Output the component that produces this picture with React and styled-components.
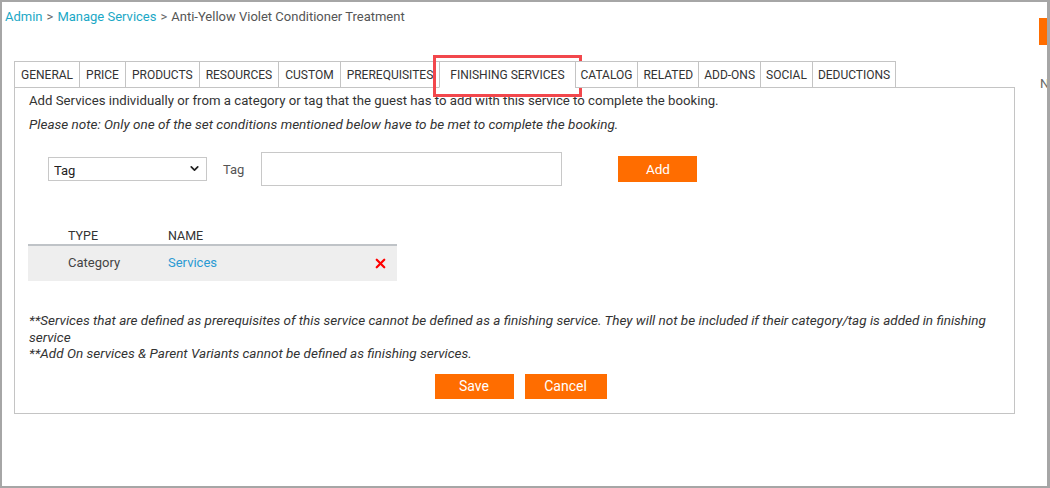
import React from "react";
import styled, { createGlobalStyle } from "styled-components";
import { ChevronDown, X } from "lucide-react";

const tabs = [
    "GENERAL",
    "PRICE",
    "PRODUCTS",
    "RESOURCES",
    "CUSTOM",
    "PREREQUISITES",
    "FINISHING SERVICES",
    "CATALOG",
    "RELATED",
    "ADD-ONS",
    "SOCIAL",
    "DEDUCTIONS",
];

const ACTIVE = 6;

const GlobalStyle = createGlobalStyle`
    html, body {
        margin: 0;
        padding: 0;
        background: #fff;
    }
    body {
        font-family: Roboto, "Liberation Sans", Arial, sans-serif;
        color: #333;
    }
    * {
        box-sizing: border-box;
    }
`;

const App = () => {
    return (
        <>
            <GlobalStyle />
            <Frame>
                <Main>
                    <Breadcrumb>
                        <Crumb href="#">Admin</Crumb>
                        <Sep>&gt;</Sep>
                        <Crumb href="#">Manage Services</Crumb>
                        <Sep>&gt;</Sep>
                        <Current>Anti-Yellow Violet Conditioner Treatment</Current>
                    </Breadcrumb>

                    <TabBar>
                        {tabs.map((t, i) => (
                            <Tab key={t} $active={i === ACTIVE} $compact={i > ACTIVE}>
                                {t}
                                {i === ACTIVE && <Highlight />}
                            </Tab>
                        ))}
                    </TabBar>

                    <Panel>
                        <Intro>
                            Add Services individually or from a category or tag that the guest has to add with this service to complete the booking.
                        </Intro>
                        <Note>
                            Please note: Only one of the set conditions mentioned below have to be met to complete the booking.
                        </Note>

                        <FormRow>
                            <SelectWrap>
                                <Select defaultValue="tag">
                                    <option value="service">Service</option>
                                    <option value="category">Category</option>
                                    <option value="tag">Tag</option>
                                </Select>
                                <Chevron size={13} strokeWidth={3.2} />
                            </SelectWrap>
                            <Label>Tag</Label>
                            <TextInput type="text" />
                            <OrangeButton $width={79} $height={26} $ml={56}>Add</OrangeButton>
                        </FormRow>

                        <Table>
                            <HeadRow>
                                <TypeCell>TYPE</TypeCell>
                                <NameCell>NAME</NameCell>
                            </HeadRow>
                            <BodyRow>
                                <TypeCell>Category</TypeCell>
                                <NameCell>
                                    <NameLink href="#">Services</NameLink>
                                </NameCell>
                                <Remove>
                                    <X size={15} strokeWidth={3.6} color="#ff0000" />
                                </Remove>
                            </BodyRow>
                        </Table>

                        <Notes>
                            <div>
                                **Services that are defined as prerequisites of this service cannot be defined as a finishing service. They will not be included if their category/tag is added in finishing service
                            </div>
                            <div>**Add On services &amp; Parent Variants cannot be defined as finishing services.</div>
                        </Notes>

                        <Actions>
                            <OrangeButton $width={79} $height={25} $big>Save</OrangeButton>
                            <OrangeButton $width={82} $height={25} $big>Cancel</OrangeButton>
                        </Actions>
                    </Panel>
                </Main>

                <Side>
                    <SideBlock />
                    <SideLetter>N</SideLetter>
                </Side>
            </Frame>
        </>
    );
};

const Frame = styled.div`
    display: flex;
    width: 1050px;
    height: 488px;
    border: 2px solid #a6a6a6;
    border-right-width: 3px;
    overflow: hidden;
`;

const Main = styled.div`
    width: 1036px;
    flex-shrink: 0;
    display: flex;
    flex-direction: column;
`;

const Breadcrumb = styled.div`
    display: flex;
    align-items: center;
    gap: 4px;
    padding: 7px 0 0 3px;
    height: 23px;
    font-size: 13px;
    line-height: 16px;
`;

const Crumb = styled.a`
    color: #1ba8c6;
    text-decoration: none;
`;

const Sep = styled.span`
    color: #666;
`;

const Current = styled.span`
    color: #555;
`;

const TabBar = styled.div`
    display: flex;
    margin: 36px 0 0 12px;
    position: relative;
    z-index: 1;
`;

const Tab = styled.div`
    position: relative;
    height: 27px;
    padding: ${(p) => (p.$active ? "0 10px" : p.$compact ? "0 5px" : "0 6px")};
    display: flex;
    align-items: center;
    font-size: 12px;
    color: #333;
    white-space: nowrap;
    background: #fff;
    border: 1px solid #c4c4c4;
    border-bottom: ${(p) => (p.$active ? "1px solid #fff" : "1px solid #c4c4c4")};
    margin-left: -1px;

    &:first-child {
        margin-left: 0;
    }
`;

const Highlight = styled.span`
    position: absolute;
    left: -7px;
    right: -7px;
    top: -7px;
    bottom: -10px;
    border: 3px solid #f2474c;
    pointer-events: none;
`;

const Panel = styled.div`
    width: 1001px;
    margin: -1px 0 0 12px;
    border: 1px solid #c4c4c4;
    padding: 4px 8px 14px 14px;
    display: flex;
    flex-direction: column;
`;

const Intro = styled.div`
    font-size: 13.2px;
    line-height: 18px;
    color: #333;
`;

const Note = styled.div`
    margin-top: 5px;
    font-size: 13.5px;
    line-height: 18px;
    font-style: italic;
    color: #333;
`;

const FormRow = styled.div`
    display: flex;
    align-items: center;
    height: 34px;
    margin-top: 19px;
    padding-left: 19px;
`;

const SelectWrap = styled.div`
    position: relative;
    width: 159px;
    height: 24px;
`;

const Select = styled.select`
    appearance: none;
    width: 100%;
    height: 100%;
    border: 1px solid #c8c8c8;
    border-radius: 0;
    background: #fff;
    padding: 2px 0 0 5px;
    font-family: Roboto, "Liberation Sans", Arial, sans-serif;
    font-size: 13px;
    color: #222;
    outline: none;
`;

const Chevron = styled(ChevronDown)`
    position: absolute;
    right: 6px;
    top: 5px;
    color: #222;
    pointer-events: none;
`;

const Label = styled.span`
    margin-left: 16px;
    font-size: 13px;
    color: #555;
`;

const TextInput = styled.input`
    margin-left: 17px;
    width: 301px;
    height: 34px;
    border: 1px solid #c8c8c8;
    border-radius: 0;
    outline: none;
`;

const OrangeButton = styled.button`
    width: ${(p) => p.$width}px;
    height: ${(p) => p.$height}px;
    margin-left: ${(p) => p.$ml || 0}px;
    background: #ff6d00;
    color: #fff;
    border: none;
    border-radius: 0;
    padding: 0;
    font-family: Roboto, "Liberation Sans", Arial, sans-serif;
    font-size: ${(p) => (p.$big ? "14px" : "13.5px")};
    cursor: pointer;
`;

const Table = styled.div`
    width: 369px;
    margin: 40px 0 0 -1px;
    display: flex;
    flex-direction: column;
`;

const HeadRow = styled.div`
    display: flex;
    align-items: center;
    height: 20px;
    padding-left: 40px;
    border-bottom: 2px solid #bfc3c7;
    font-size: 12.5px;
    color: #333;
`;

const BodyRow = styled.div`
    display: flex;
    align-items: center;
    height: 35px;
    padding: 0 0 3px 40px;
    background: #eeeeee;
    font-size: 13px;
    color: #444;
`;

const TypeCell = styled.div`
    width: 100px;
`;

const NameCell = styled.div`
    flex: 1;
`;

const NameLink = styled.a`
    color: #2a9ad3;
    text-decoration: none;
`;

const Remove = styled.span`
    display: flex;
    margin-right: 9px;
    margin-top: 3px;
`;

const Notes = styled.div`
    margin-top: 31px;
    font-size: 13.5px;
    line-height: 16.5px;
    font-style: italic;
    color: #333;
`;

const Actions = styled.div`
    display: flex;
    justify-content: center;
    gap: 11px;
    margin-top: 12px;
    padding-left: 6px;
`;

const Side = styled.div`
    flex: 1;
    overflow: hidden;
    padding: 16px 0 0 1px;
    display: flex;
    flex-direction: column;
`;

const SideBlock = styled.div`
    width: 30px;
    height: 27px;
    background: #ff6d00;
`;

const SideLetter = styled.div`
    margin-top: 31px;
    margin-left: 1px;
    font-size: 13px;
    color: #666;
`;

export default App;
